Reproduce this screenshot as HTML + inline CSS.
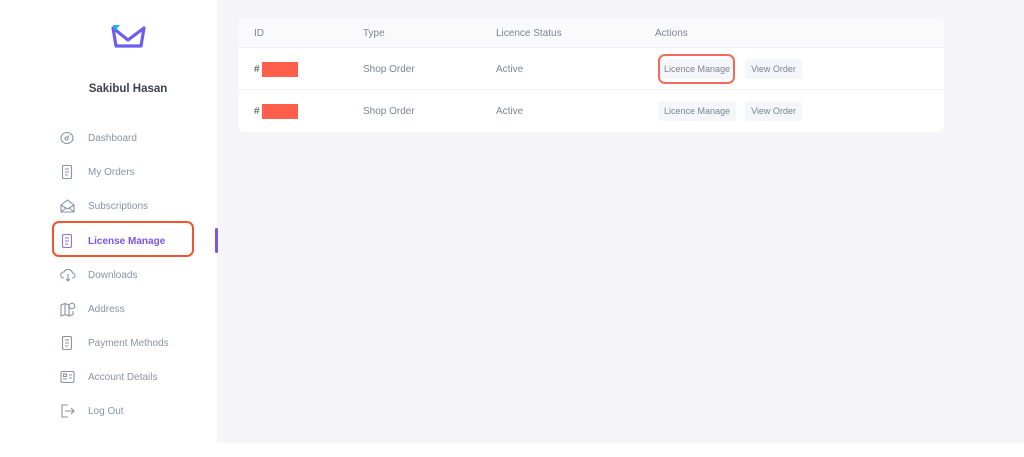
<!DOCTYPE html><html><head><style>
*{margin:0;padding:0;box-sizing:border-box}
body{width:1024px;height:457px;background:#fff;font-family:"Liberation Sans",sans-serif;position:relative;overflow:hidden}
.main{position:absolute;left:217px;top:0;width:807px;height:443px;background:#f4f4f9}
.card{position:absolute;left:238px;top:18px;width:706px;height:114px;background:#fff;border-radius:6px;overflow:hidden}
.hdr{height:30px;background:#fafafc;border-bottom:1px solid #eeeef3;position:relative}
.row{height:42px;border-bottom:1px solid #eeeef3;position:relative}
.t{position:absolute;font-size:10px;color:#7b8494;white-space:nowrap}
.btn{position:absolute;height:20px;line-height:20px;font-size:9px;color:#7b8494;background:#f5f6fa;border-radius:3px;text-align:center;white-space:nowrap}
.red{position:absolute;left:262px;width:36px;height:15px;background:#fe5f4d}
.nav{position:absolute;left:60px;font-size:10px;color:#8a93a3}
.nav svg{position:absolute;left:0;top:-2px}
.nav span{position:absolute;left:28px;white-space:nowrap}
</style></head><body>
<div class="main"></div>
<svg style="position:absolute;left:110px;top:24px" width="40" height="28" viewBox="0 0 40 28"><path d="M3 4 L18 16 L34 4 L31 22 L6 22 Z" fill="none" stroke="#6c5cf0" stroke-width="3.2" stroke-linejoin="round"/><path d="M3 1 L10 1 L5 7 Z" fill="#1fb6e8"/></svg>
<div style="position:absolute;left:0;top:83px;text-align:center;font-size:11.5px;font-weight:bold;color:#3d4250;width:256px">Sakibul Hasan</div>
<div class="nav" style="top:133px"><svg width="14" height="14" viewBox="0 0 14 14" fill="none" stroke="#8a93a3" stroke-width="1.1"><ellipse cx="7" cy="7" rx="6" ry="5.5"/><circle cx="6.5" cy="7.5" r="1.5"/><path d="M8 6 L9 4.5"/></svg><span>Dashboard</span></div>
<div class="nav" style="top:167px"><svg width="14" height="14" viewBox="0 0 14 14" fill="none" stroke="#8a93a3" stroke-width="1.1"><rect x="2.5" y="0.5" width="9" height="13" rx="1.5"/><path d="M5 4h4M5 7h4M5 10h3"/></svg><span>My Orders</span></div>
<div class="nav" style="top:201px"><svg width="15" height="14" viewBox="0 0 15 14" fill="none" stroke="#8a93a3" stroke-width="1.1"><path d="M1 6 L7.5 1 L14 6 V13 H1 Z M1 6 L7.5 10 L14 6 M1 13 L6 9 M14 13 L9 9"/></svg><span>Subscriptions</span></div>
<div style="position:absolute;left:52px;top:221px;width:142px;height:36px;border:2px solid #f2542f;border-radius:7px"></div>
<div style="position:absolute;left:215px;top:228px;width:3px;height:25px;background:#7a55e0;border-radius:2px"></div>
<div class="nav" style="top:236px;color:#7a55e0;font-weight:bold"><svg width="14" height="14" viewBox="0 0 14 14" fill="none" stroke="#8d72e8" stroke-width="1.1"><rect x="2.5" y="0.5" width="9" height="13" rx="1.5"/><path d="M5 4h4M5 7h4M5 10h3"/></svg><span>License Manage</span></div>
<div class="nav" style="top:270px"><svg width="16" height="14" viewBox="0 0 16 14" fill="none" stroke="#8a93a3" stroke-width="1.1"><path d="M4 10 H3.5 A3 3 0 0 1 4 4 A4.5 4.5 0 0 1 12.5 5 A2.5 2.5 0 0 1 12.5 10 H12 M8 6 V13 M6 11 L8 13 L10 11"/></svg><span>Downloads</span></div>
<div class="nav" style="top:304px"><svg width="16" height="15" viewBox="0 0 16 15" fill="none" stroke="#8a93a3" stroke-width="1.1"><path d="M1 3 L5 1.5 L9 3 V14 L5 12.5 L1 14 Z M5 1.5 V12.5 M9 14 L13 12.5 V9"/><circle cx="12" cy="4" r="2.8"/></svg><span>Address</span></div>
<div class="nav" style="top:338px"><svg width="14" height="14" viewBox="0 0 14 14" fill="none" stroke="#8a93a3" stroke-width="1.1"><rect x="2.5" y="0.5" width="9" height="13" rx="1.5"/><path d="M5 4h4M5 7h4M5 10h3"/></svg><span>Payment Methods</span></div>
<div class="nav" style="top:372px"><svg width="15" height="14" viewBox="0 0 15 14" fill="none" stroke="#8a93a3" stroke-width="1.1"><rect x="1" y="1.5" width="13" height="11" rx="1.5"/><rect x="3.5" y="4" width="3" height="2.5"/><path d="M3 9h4M9 5h3M9 8h3"/></svg><span>Account Details</span></div>
<div class="nav" style="top:406px"><svg width="15" height="14" viewBox="0 0 15 14" fill="none" stroke="#8a93a3" stroke-width="1.1"><path d="M8 1 H2 V13 H8 M5 7 H14 M11 4 L14 7 L11 10"/></svg><span>Log Out</span></div>
<div class="card">
<div class="hdr"><span class="t" style="left:16px;top:10px">ID</span><span class="t" style="left:125px;top:10px">Type</span><span class="t" style="left:258px;top:10px">Licence Status</span><span class="t" style="left:417px;top:10px">Actions</span></div>
<div class="row"><span class="t" style="left:16px;top:16px;color:#444">#</span><span class="t" style="left:125px;top:16px">Shop Order</span><span class="t" style="left:258px;top:16px">Active</span><span class="btn" style="left:420px;top:11px;width:78px">Licence Manage</span><span class="btn" style="left:507px;top:11px;width:57px">View Order</span></div>
<div class="row" style="border:none"><span class="t" style="left:16px;top:16px;color:#444">#</span><span class="t" style="left:125px;top:16px">Shop Order</span><span class="t" style="left:258px;top:16px">Active</span><span class="btn" style="left:420px;top:11px;width:78px">Licence Manage</span><span class="btn" style="left:507px;top:11px;width:57px">View Order</span></div>
</div>
<div class="red" style="top:62px"></div><div class="red" style="top:104px"></div>
<div style="position:absolute;left:658px;top:54px;width:77px;height:30px;border:2px solid #f36a5c;border-radius:7px"></div>
</body></html>
